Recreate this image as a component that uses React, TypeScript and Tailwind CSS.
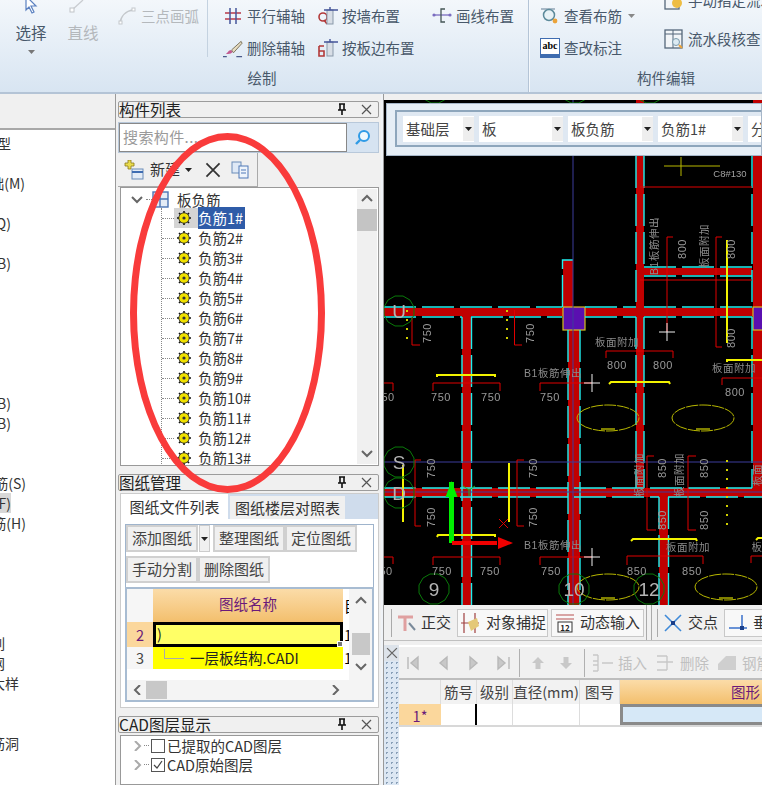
import type { ReactNode } from "react";

const FONT = "font-['Noto_Sans_CJK_SC','Liberation_Sans',sans-serif]";

/* ---------- small drawn icons ---------- */

function Pin() {
  return (
    <svg width="12" height="13" viewBox="0 0 12 13">
      <path d="M3 1h6M4 1v6M8 1v6M2 7h8M6 7v5" stroke="#111" strokeWidth="1.6" fill="none" />
    </svg>
  );
}

function CloseX({ size = 11, color = "#555" }: { size?: number; color?: string }) {
  return (
    <svg width={size} height={size} viewBox="0 0 11 11" className="shrink-0">
      <path d="M1 1l9 9M10 1l-9 9" stroke={color} strokeWidth="1.2" />
    </svg>
  );
}

function Caret({ color = "#222" }: { color?: string }) {
  return (
    <svg width="7" height="4" viewBox="0 0 7 4" className="shrink-0">
      <path d="M0 0h7L3.5 4z" fill={color} />
    </svg>
  );
}

function Chevron({ dir, color = "#666" }: { dir: "up" | "down" | "left" | "right"; color?: string }) {
  const d = {
    up: "M1 7l5-5 5 5",
    down: "M1 2l5 5 5-5",
    left: "M8 0L3 5l5 5",
    right: "M3 0l5 5-5 5",
  }[dir];
  return (
    <svg width="12" height="10" viewBox="0 0 12 10" className="shrink-0">
      <path d={d} stroke={color} strokeWidth="2" fill="none" />
    </svg>
  );
}

function Gear() {
  return (
    <svg width="14" height="14" viewBox="0 0 14 14">
      <path d="M7 0v14M0 7h14M2 2l10 10M12 2L2 12" stroke="#111" strokeWidth="1.6" />
      <circle cx="7" cy="7" r="5.2" fill="#f0e000" stroke="#222" strokeWidth="0.8" />
      <circle cx="7" cy="7" r="1.6" fill="#333" />
    </svg>
  );
}

const ribbonIcons: Record<string, ReactNode> = {
  arc: (
    <svg width="18" height="18" viewBox="0 0 18 18">
      <path d="M2 16C3 9 8 4 15 3" stroke="#c4c8cc" strokeWidth="1.6" fill="none" />
      <rect x="1" y="14" width="3" height="3" fill="#fff" stroke="#c4c8cc" />
      <rect x="14" y="1" width="3" height="3" fill="#fff" stroke="#c4c8cc" />
    </svg>
  ),
  parallel: (
    <svg width="18" height="18" viewBox="0 0 18 18">
      <path d="M1 6h16M1 12h16" stroke="#b8394a" strokeWidth="1.3" />
      <path d="M6 1v16M12 1v16" stroke="#45559a" strokeWidth="1.5" />
    </svg>
  ),
  brush: (
    <svg width="21" height="19" viewBox="0 0 21 19">
      <path d="M19 2L9 11l2 3 9-10z" fill="#e7dcc0" stroke="#77705a" />
      <path d="M8 11c-3 1-3 3-5 4 3 1 6 0 7-2z" fill="#c25a90" />
      <path d="M0 18h4M14 18h6" stroke="#4a5a8a" strokeWidth="1.3" />
    </svg>
  ),
  wall: (
    <svg width="20" height="18" viewBox="0 0 20 18">
      <circle cx="5" cy="10" r="4" fill="none" stroke="#b23838" strokeWidth="1.6" />
      <path d="M6 13l3 4" stroke="#b23838" strokeWidth="1.6" />
      <rect x="9" y="3" width="6" height="14" fill="#d8dee6" stroke="#8a99aa" />
      <path d="M6 3h14M12 0v3" stroke="#45559a" strokeWidth="1.4" />
    </svg>
  ),
  slab: (
    <svg width="20" height="18" viewBox="0 0 20 18">
      <path d="M1 7v10h5V12H1M6 7H1" fill="none" stroke="#b23838" strokeWidth="1.6" />
      <rect x="9" y="3" width="6" height="14" fill="#d8dee6" stroke="#8a99aa" />
      <path d="M6 3h14M12 0v3" stroke="#45559a" strokeWidth="1.4" />
    </svg>
  ),
  drawline: (
    <svg width="20" height="18" viewBox="0 0 20 18">
      <path d="M1 8h18" stroke="#7a6cc0" strokeWidth="1.3" />
      <circle cx="2" cy="8" r="1.6" fill="#7a6cc0" />
      <circle cx="18" cy="8" r="1.6" fill="#7a6cc0" />
      <path d="M13 2H9v13h4" stroke="#455" strokeWidth="1.3" fill="none" />
    </svg>
  ),
  view: (
    <svg width="20" height="18" viewBox="0 0 20 18">
      <path d="M1 2h14" stroke="#8aa0b0" strokeWidth="1.4" />
      <circle cx="9" cy="8" r="5.5" fill="#e8f2f6" stroke="#5c8a9a" strokeWidth="1.5" />
      <circle cx="15" cy="14" r="2.4" fill="#eba33a" />
    </svg>
  ),
  abc: (
    <div className="w-[20px] h-[20px] bg-white border border-[#3e6cb0] border-b-[4px] text-[10px] leading-[13px] text-center font-bold text-black font-['Liberation_Serif',serif]">
      abc
    </div>
  ),
  flow: (
    <svg width="20" height="20" viewBox="0 0 20 20">
      <rect x="1" y="1" width="17" height="18" fill="#f2f5f8" stroke="#55677a" strokeWidth="1.3" />
      <path d="M9 1v18M1 5h17" stroke="#55677a" />
      <circle cx="12" cy="13" r="3.5" fill="#dceaf2" stroke="#7a99aa" />
      <path d="M15 16l3 3" stroke="#eba33a" strokeWidth="2" />
    </svg>
  ),
  gearDoc: (
    <svg width="20" height="20" viewBox="0 0 20 20">
      <rect x="1" y="1" width="14" height="18" fill="#f2f5f8" stroke="#55677a" strokeWidth="1.3" />
      <circle cx="13" cy="13" r="5" fill="#eebd44" />
    </svg>
  ),
};

function RibbonItem({ icon, label, disabled }: { icon: string; label: string; disabled?: boolean }) {
  return (
    <div className="flex items-center h-[18px] gap-1 whitespace-nowrap">
      <span className="flex items-center justify-center w-[20px] h-[18px] shrink-0">{ribbonIcons[icon]}</span>
      <span className={disabled ? "text-[#b4b8bc]" : "text-[#48586a]"}>{label}</span>
    </div>
  );
}

/* ---------- ribbon ---------- */

function Ribbon() {
  return (
    <div className="flex h-[94px] shrink-0 overflow-hidden border-b-2 border-[#b4c4d6] bg-gradient-to-b from-[#f3f7fb] to-[#d8e5f2] text-[14.5px]">
      <div className="flex flex-col w-[529px] shrink-0 border-r border-[#b4c4d6]">
        <div className="flex h-[68px]">
          <div className="ml-[15px] w-[32px] flex flex-col items-center whitespace-nowrap">
            <svg width="16" height="14" viewBox="0 0 16 14" className="mb-[8px]">
              <path d="M3 -4v14l3-3 3 6 2-1-3-6h5z" fill="#fff" stroke="#5a80c0" strokeWidth="1.2" />
            </svg>
            <span className="text-[#48586a] leading-[20px] text-[15.5px]">选择</span>
            <span className="mt-[8px]"><Caret color="#777" /></span>
          </div>
          <div className="ml-[21px] w-[30px] flex flex-col items-center whitespace-nowrap">
            <svg width="28" height="14" viewBox="0 0 28 14" className="mb-[8px]">
              <path d="M3 10L14 0" stroke="#c9ccd0" strokeWidth="1.3" />
              <rect x="1" y="8" width="4" height="4" fill="#fff" stroke="#c0c4c8" />
            </svg>
            <span className="text-[#b4b8bc] leading-[20px] text-[15.5px]">直线</span>
          </div>
          <div className="ml-[19px] pt-[7px] w-[90px]">
            <RibbonItem icon="arc" label="三点画弧" disabled />
          </div>
          <div className="w-px h-[57px] bg-[#c4d2e0]" />
          <div className="ml-[15px] pt-[7px] flex flex-col gap-[14px] w-[95px]">
            <RibbonItem icon="parallel" label="平行辅轴" />
            <RibbonItem icon="brush" label="删除辅轴" />
          </div>
          <div className="pt-[7px] flex flex-col gap-[14px] w-[114px]">
            <RibbonItem icon="wall" label="按墙布置" />
            <RibbonItem icon="slab" label="按板边布置" />
          </div>
          <div className="pt-[7px]">
            <RibbonItem icon="drawline" label="画线布置" />
          </div>
        </div>
        <div className="text-center text-[#48586a] leading-[20px] pr-[4px]">绘制</div>
      </div>
      <div className="flex flex-col flex-1 min-w-0 border-l border-[#f4f8fc]">
        <div className="flex h-[68px]">
          <div className="ml-[10px] pt-[7px] flex flex-col gap-[14px] w-[124px] shrink-0">
            <div className="flex items-center gap-[6px]">
              <RibbonItem icon="view" label="查看布筋" />
              <Caret color="#888" />
            </div>
            <RibbonItem icon="abc" label="查改标注" />
          </div>
          <div className="-mt-[9px] flex flex-col gap-[21px] shrink-0">
            <RibbonItem icon="gearDoc" label="手动指定流水段" />
            <RibbonItem icon="flow" label="流水段核查" />
          </div>
        </div>
        <div className="text-[#48586a] leading-[20px] pl-[107px]">构件编辑</div>
      </div>
    </div>
  );
}

/* ---------- left tree (cut off by the window edge) ---------- */

const leftRows: [string, number][] = [
  ["类型", 104], ["", 0], ["基础(M)", 90], ["", 0], ["墙(Q)", 104], ["", 0], ["板(B)", 104],
  ["", 0], ["", 0], ["", 0], ["", 0], ["", 0], ["", 0], ["板(B)", 104], ["板(B)", 104], ["", 0], ["", 0],
  ["板筋(S)", 89], ["(F)", 104], ["筋(H)", 89], ["", 0], ["", 0], ["", 0], ["", 0], ["", 0],
  ["排列", 110], ["钢网", 110], ["节点大样", 96], ["", 0], ["", 0], ["板筋洞", 96],
];

function LeftPanel() {
  return (
    <div className="w-[116px] shrink-0 flex flex-col border-r border-[#9a9a9a] bg-white overflow-hidden">
      <div className="h-[36px] shrink-0 bg-[#f0f0f0] border-b-2 border-[#a8a8a8]" />
      <div className="flex flex-col pt-[3px] text-[14px] text-[#333]">
        {leftRows.map(([text, pad], i) => (
          <div key={i} className="flex justify-end h-[20px] leading-[20px] whitespace-nowrap" style={{ paddingRight: pad }}>
            <span className={text === "(F)" ? "bg-[#d8d8d8]" : ""}>{text}</span>
          </div>
        ))}
      </div>
    </div>
  );
}

/* ---------- middle dock panels ---------- */

function DockHeader({ title }: { title: string }) {
  return (
    <div className="flex items-center h-[17px] shrink-0 bg-[#f0f0f0] border border-[#9c9c9c] rounded-[2px] text-[15.5px] text-[#222] whitespace-nowrap">
      <span className="flex-1">{title}</span>
      <span className="mr-[13px] flex"><Pin /></span>
      <span className="mr-[6px] flex"><CloseX /></span>
    </div>
  );
}

function Btn({ children, w }: { children: ReactNode; w: string }) {
  return (
    <div className={`${w} h-[27px] flex items-center justify-center bg-[#f0f0f0] border-2 border-[#d0d0d0] text-[15px] text-[#444] whitespace-nowrap`}>
      {children}
    </div>
  );
}

function ComponentList() {
  const rows = Array.from({ length: 13 }, (_, i) => `负筋${i + 1}#`);
  return (
    <div className="flex flex-col">
      <DockHeader title="构件列表" />
      <div className="flex mt-[4px] h-[31px] border border-[#b8c8da]">
        <div className="flex-1 bg-white border border-[#888] flex items-center pl-[3px] text-[15px] text-[#9a9a9a] tracking-[0.4px]">搜索构件...</div>
        <div className="w-[31px] bg-[#d6e3f1] flex items-center justify-center">
          <svg width="18" height="18" viewBox="0 0 18 18">
            <circle cx="10" cy="7" r="5" fill="#eef8fd" stroke="#2f9be6" strokeWidth="2" />
            <path d="M6 11l-4 4" stroke="#2f9be6" strokeWidth="2.4" />
          </svg>
        </div>
      </div>
      <div className="flex items-center w-[140px] h-[34px] bg-[#f0f0f0] border-r border-b border-[#aaa] text-[15px] text-[#333]">
        <svg width="22" height="20" viewBox="0 0 22 20" className="ml-[5px] shrink-0">
          <path d="M5 0h3v3h3v3H8v3H5V6H2V3h3z" fill="#e9dc4e" stroke="#8a7a1a" strokeWidth="0.8" />
          <rect x="9" y="9" width="11" height="10" fill="#e4ecf6" stroke="#6a8cb8" />
          <path d="M9 12h11" stroke="#3f6db2" strokeWidth="2" />
        </svg>
        <span className="ml-[5px] whitespace-nowrap">新建</span>
        <span className="ml-[5px] flex"><Caret /></span>
        <span className="ml-[13px] flex"><CloseX size={16} color="#333" /></span>
        <svg width="20" height="18" viewBox="0 0 20 18" className="ml-[10px] shrink-0">
          <rect x="1" y="1" width="9" height="11" fill="#dfe9f6" stroke="#6a8cb8" />
          <rect x="8" y="5" width="9" height="12" fill="#eef4fb" stroke="#4f79b8" />
          <path d="M10 9h5M10 12h5" stroke="#4f79b8" />
        </svg>
      </div>
      <div className="flex h-[279px] ml-[2px] bg-white border border-[#999] overflow-hidden text-[14.5px] text-[#333]">
        <div className="flex-1 min-w-0 overflow-hidden">
          <div className="flex items-center h-[20px] pt-[3px] pl-[10px]">
            <Chevron dir="down" />
            <span className="ml-[3px] w-[6px] border-t border-dotted border-[#888]" />
            <svg width="17" height="17" viewBox="0 0 17 17" className="shrink-0">
              <rect x="1" y="1" width="15" height="15" fill="#e4ecf6" stroke="#4a74b4" strokeWidth="1.4" />
              <path d="M8 1v15M1 8h15" stroke="#4a74b4" strokeWidth="1.4" />
            </svg>
            <span className="ml-[8px]">板负筋</span>
          </div>
          <div className="ml-[40px] border-l border-dotted border-[#888] flex flex-col">
            {rows.map((r, i) => (
              <div key={r} className="flex items-center h-[20px] whitespace-nowrap">
                <span className="w-[12px] border-t border-dotted border-[#888]" />
                <span className={`flex items-center h-[20px] pl-[3px] pr-[7px] ${i === 0 ? "bg-[#d4d4d4]" : ""}`}>
                  <Gear />
                </span>
                <span className={i === 0 ? "bg-[#2f5ca8] text-white pr-[2px]" : ""}>{r}</span>
              </div>
            ))}
          </div>
        </div>
        <div className="w-[20px] my-[1px] mr-[1px] bg-[#f0f0f0] flex flex-col items-center">
          <div className="h-[20px] flex items-center"><Chevron dir="up" /></div>
          <div className="w-full h-[22px] bg-[#c4c4c4]" />
          <div className="flex-1" />
          <div className="h-[20px] flex items-center"><Chevron dir="down" /></div>
        </div>
      </div>
    </div>
  );
}

function DrawingPanel() {
  return (
    <div className="flex flex-col mt-[8px]">
      <DockHeader title="图纸管理" />
      <div className="mt-[2px] ml-[2px] h-[215px] bg-[#f0f0f0] border border-[#ccc] flex flex-col">
        <div className="flex h-[25px] shrink-0 bg-[#cfdcec] text-[15px] text-[#333] whitespace-nowrap">
          <div className="w-[107px] bg-white text-center leading-[25px]">图纸文件列表</div>
          <div className="w-[115px] ml-[2px] mt-[2px] bg-[#f0f0f0] text-center leading-[23px]">图纸楼层对照表</div>
        </div>
        <div className="flex-1 bg-white px-[4px] pt-[5px]">
          <div className="border border-[#9fb4cc] border-b-0 pb-[4px] flex flex-col gap-[4px]">
            <div className="flex">
              <Btn w="w-[72px]">添加图纸</Btn>
              <div className="w-[11px] ml-px h-[27px] bg-[#f0f0f0] border border-[#ccc] flex items-center justify-center"><Caret /></div>
              <span className="w-[3px]" />
              <Btn w="w-[72px]">整理图纸</Btn>
              <Btn w="w-[72px]">定位图纸</Btn>
            </div>
            <div className="flex">
              <Btn w="w-[72px]">手动分割</Btn>
              <Btn w="w-[72px]">删除图纸</Btn>
            </div>
          </div>
          <div className="flex flex-col border-2 border-[#a8bcd2] h-[115px] bg-[#f4f4f4]">
            <div className="flex h-[91px] text-[14.5px]">
              <div className="flex-1 min-w-0 bg-white overflow-hidden">
                <div className="flex h-[33px]">
                  <div className="w-[26px] shrink-0 bg-[#f6f6f6]" />
                  <div className="w-[190px] shrink-0 pb-[3px] bg-gradient-to-b from-[#fbdca8] to-[#f3bf6c] text-[#6b1a7a] flex items-center justify-center">图纸名称</div>
                  <div className="pl-[1px] leading-[33px]">目</div>
                </div>
                <div className="flex h-[25px]">
                  <div className="w-[26px] shrink-0 bg-[#fbd79c] text-[#6b1a7a] text-center leading-[25px]">2</div>
                  <div className="relative w-[190px] shrink-0 bg-[#ffff66] border-[3px] border-black leading-[18px] pl-[1px] text-[#222]">
                    )
                    <span className="absolute -right-[3px] -bottom-[3px] w-[6px] h-[6px] bg-[#777] border border-white" />
                  </div>
                  <div className="pl-[1px] leading-[25px]">1</div>
                </div>
                <div className="flex h-[22px]">
                  <div className="w-[26px] shrink-0 bg-[#f6f6f6] text-[#444] text-center leading-[22px]">3</div>
                  <div className="w-[190px] shrink-0 bg-[#ffff00] flex items-center text-[#222] whitespace-nowrap">
                    <span className="ml-[11px] mb-[8px] w-[20px] h-[10px] border-l border-b border-[#aaa]" />
                    <span className="ml-[6px]">一层板结构.CADI</span>
                  </div>
                  <div className="pl-[1px] leading-[22px]">1</div>
                </div>
              </div>
              <div className="w-[23px] shrink-0 flex flex-col items-center">
                <div className="h-[24px] flex items-center"><Chevron dir="up" /></div>
                <div className="w-[18px] h-[22px] mt-[20px] bg-[#c8c8c8]" />
                <div className="h-[24px] flex items-center"><Chevron dir="down" /></div>
              </div>
            </div>
            <div className="flex items-center h-[20px] px-[5px]">
              <Chevron dir="left" />
              <div className="w-[21px] h-[18px] ml-[2px] bg-[#c8c8c8]" />
              <div className="flex-1" />
              <span className="mr-[25px] flex"><Chevron dir="right" /></span>
            </div>
          </div>
        </div>
      </div>
    </div>
  );
}

function LayerPanel() {
  return (
    <div className="flex flex-col mt-[8px]">
      <DockHeader title="CAD图层显示" />
      <div className="mt-[2px] ml-[2px] h-[50px] bg-white border border-[#999] text-[14.5px] text-[#333]">
        {["已提取的CAD图层", "CAD原始图层"].map((t, i) => (
          <div key={t} className="flex items-center h-[19px] pl-[11px] whitespace-nowrap">
            <Chevron dir="right" color="#aaa" />
            <span className="w-[5px] border-t border-dotted border-[#888] mr-[2px]" />
            <span className="flex items-center justify-center w-[14px] h-[14px] border border-[#555] mr-[2px] shrink-0">
              {i === 1 && (
                <svg width="12" height="12" viewBox="0 0 12 12">
                  <path d="M2 6l3 3 5-7" stroke="#444" strokeWidth="1.2" fill="none" />
                </svg>
              )}
            </span>
            {t}
          </div>
        ))}
      </div>
    </div>
  );
}

/* ---------- CAD canvas ---------- */

const beams = [
  [384, 308, 378, 8], [384, 488, 378, 9], [640, 268, 112, 7],
  [462, 316, 9, 289], [568, 330, 12, 275], [563, 260, 10, 48],
  [636, 100, 8, 390], [753, 100, 9, 390], [659, 497, 9, 108],
];
const cyan = [
  "M384 307H562", "M585 307H636", "M644 307H752", "M384 317H462", "M471 317H562", "M585 317H636", "M644 317H752",
  "M384 488H752", "M384 497H659", "M668 497H762", "M644 267H752", "M644 276H752",
  "M462 317V605", "M471.5 317V605", "M568 330V605", "M580 330V605",
  "M636 156V305", "M644 156V268", "M636 317V488", "M644 317V488", "M752 156V305", "M752 317V488",
  "M659 497V605", "M668.5 497V605", "M562.5 307V260H573",
];
const redLines = [
  "M412 317V345H420", "M514.5 310V345H522", "M673 237H667V332", "M722 237H716V347H722",
  "M606 358V351H673V358", "M384 383H393V391", "M433 391V383H500V391", "M540 391V383H592", "M722 385V378H762",
  "M421 460H415V526H421", "M524 460H517V526H524", "M654 456H647V530H656", "M696 456H688V530H696",
  "M433 565V557H500V565", "M384 557H393V564", "M540 565V557H592", "M627 565V556H703V564", "M751 563V556H762",
  "M640 187H752", "M640 280H752", "M499 519L508 528M508 519L499 528",
];
const yellow = [
  "M437 377V375H495V377", "M609 384L611 382H669L670 384", "M727 362V360H762", "M727 240V343",
  "M403 465V522", "M509 463V522", "M437 537L438 535H495V537", "M631 541L633 539H696L697 541", "M756 540L758 538H762",
];
const yellowDots = ["M407 310V342", "M507 310V342", "M727 460V525"];
const ellipses = [[608, 418], [703, 418], [608, 587], [726, 587]];
const bubbles: [number, number, string][] = [
  [399, 311, "U"], [399, 462, "S"], [399, 493, "D"], [434, 589, "9"], [574, 589, "10"], [649, 589, "12"],
  [435, 88, ""], [575, 88, ""], [650, 88, ""],
];
const dims: [number, number, string][] = [
  [617, 365, "800"], [663, 365, "800"], [735, 392, "800"], [441, 397, "750"], [491, 397, "750"], [550, 397, "750"], [388, 397, "50"],
  [442, 571, "750"], [490, 571, "750"], [551, 571, "750"], [637, 571, "850"], [692, 571, "850"], [386, 571, "50"],
];
const dimsV: [number, number, string][] = [
  [427, 333, "750"], [530, 333, "750"], [682, 249, "800"], [731, 249, "800"], [731, 338, "800"],
  [431, 468, "750"], [431, 517, "750"], [533, 468, "750"], [533, 517, "750"],
  [662, 468, "850"], [662, 520, "850"], [704, 468, "850"], [704, 520, "850"],
];
const notes: [number, number, string][] = [
  [617, 346, "板面附加"], [734, 372, "板面附加"], [553, 377, "B1板筋伸出"], [553, 549, "B1板筋伸出"], [688, 551, "板面附加"], [757, 551, "板"],
];
const notesV: [number, number, string][] = [
  [654, 246, "B1板筋伸出"], [704, 246, "板面附加"], [639, 475, "板面附加"], [679, 475, "板面附加"], [757, 475, "板面"],
];
const cursors = [[667, 332], [592, 383], [592, 557]];

function octagon(cx: number, cy: number, r: number) {
  return Array.from({ length: 12 }, (_, i) => {
    const a = (i * Math.PI) / 6 + Math.PI / 12;
    return `${cx + r * Math.cos(a)},${cy + r * Math.sin(a)}`;
  }).join(" ");
}

function CadDrawing() {
  return (
    <svg viewBox="384 100 378 505" className="absolute inset-0 w-full h-full blur-[0.3px]">
      {beams.map(([x, y, w, h], i) => (
        <rect key={i} x={x} y={y} width={w} height={h} fill="#c00000" />
      ))}
      <rect x="563" y="307" width="22" height="23" fill="#5a0fb0" stroke="#d8c020" strokeWidth="1.2" />
      <rect x="753" y="307" width="12" height="23" fill="#5a0fb0" stroke="#d8c020" strokeWidth="1.2" />
      {cyan.map((d) => (
        <path key={d} d={d} stroke="#20f0f0" strokeWidth="1.4" fill="none" strokeDasharray="32 6" />
      ))}
      <path d="M573 100V605M384 462H762M384 492H762" stroke="#3c3c9c" strokeWidth="1" />
      {redLines.map((d) => (
        <path key={d} d={d} stroke="#e00000" strokeWidth="1" fill="none" />
      ))}
      {yellow.map((d) => (
        <path key={d} d={d} stroke="#f2f200" strokeWidth="2" fill="none" />
      ))}
      {yellowDots.map((d) => (
        <path key={d} d={d} stroke="#d0d000" strokeWidth="2" fill="none" strokeDasharray="2 7" />
      ))}
      <path d="M664 166H720M681 157V176" stroke="#b8b800" strokeWidth="1" />
      {ellipses.map(([cx, cy]) => (
        <g key={`${cx}-${cy}`}>
          <ellipse cx={cx} cy={cy} rx="31" ry="13" fill="none" stroke="#b8b800" strokeWidth="1" strokeDasharray="12 1" />
          <path d={`M${cx - 7} ${cy + 11}H${cx + 7}`} stroke="#b8b800" strokeWidth="1.4" />
        </g>
      ))}
      {bubbles.map(([cx, cy, t]) => (
        <g key={`${cx}-${cy}`}>
          <polygon points={octagon(cx, cy, 15.5)} fill="none" stroke="#0a7a0a" strokeWidth="1" />
          {t && (
            <text x={cx} y={cy + 7} textAnchor="middle" fontSize="19" fill="#b4b4b4" fontFamily="Liberation Sans, sans-serif">
              {t}
            </text>
          )}
        </g>
      ))}
      {/* ucs arrows */}
      <path d="M449 482h5v61h-5z" fill="#00f000" />
      <path d="M451.5 481l6 16h-12z" fill="#00f000" />
      <path d="M452 541h45v4h-45z" fill="#f00000" />
      <path d="M498 537l15 6-15 6z" fill="#f00000" />
      <path d="M469 496V490L463 486M469 490L475 486" stroke="#20b020" strokeWidth="1" fill="none" />
      {dims.map(([x, y, t]) => (
        <text key={`${x}-${y}`} x={x} y={y + 4} textAnchor="middle" fontSize="11" fill="#999999" fontFamily="Liberation Sans, sans-serif" letterSpacing="0.5">
          {t}
        </text>
      ))}
      {dimsV.map(([x, y, t]) => (
        <text key={`${x}-${y}`} x={x} y={y} textAnchor="middle" dominantBaseline="central" transform={`rotate(-90 ${x} ${y})`} fontSize="11" fill="#999999" fontFamily="Liberation Sans, sans-serif" letterSpacing="0.5">
          {t}
        </text>
      ))}
      {notes.map(([x, y, t]) => (
        <text key={`${x}-${y}`} x={x} y={y} textAnchor="middle" fontSize="10.5" fill="#8c8c8c" fontFamily="Liberation Sans, Noto Sans CJK SC, sans-serif" letterSpacing="0.5">
          {t}
        </text>
      ))}
      {notesV.map(([x, y, t]) => (
        <text key={`${x}-${y}`} x={x} y={y} textAnchor="middle" dominantBaseline="central" transform={`rotate(-90 ${x} ${y})`} fontSize="10.5" fill="#8c8c8c" fontFamily="Liberation Sans, Noto Sans CJK SC, sans-serif" letterSpacing="0.5">
          {t}
        </text>
      ))}
      <text x="730" y="177" textAnchor="middle" fontSize="9.5" fill="#a0a0a0" fontFamily="Liberation Sans, sans-serif">C8#130</text>
      {cursors.map(([x, y]) => (
        <path key={`${x}-${y}`} d={`M${x - 8} ${y}H${x + 8}M${x} ${y - 9}V${y + 9}`} stroke="#f0f0f0" strokeWidth="1" />
      ))}
    </svg>
  );
}

function Combo({ label, w }: { label: string; w: string }) {
  return (
    <div className={`${w} shrink-0 h-[26px] bg-white flex items-center pl-[3px] text-[14.5px] text-[#444] whitespace-nowrap`}>
      <span className="flex-1">{label}</span>
      <span className="w-[11px] h-[24px] bg-[#eeeeee] flex items-center justify-center"><Caret /></span>
    </div>
  );
}

function Canvas() {
  return (
    <div className="relative h-[505px] shrink-0 bg-black overflow-hidden">
      <CadDrawing />
      <div className="relative mt-[3px] ml-[2px] h-[53px] bg-[#e6eef6] border border-[#a6b6c8] pl-[8px] pt-[6px]">
        <div className="flex gap-[5px] h-[37px] border-2 border-r-0 border-[#8ea6bc] bg-[#dfe8f2] pl-[6px] pt-[4px] overflow-hidden">
          <Combo label="基础层" w="w-[71px]" />
          <Combo label="板" w="w-[84px]" />
          <Combo label="板负筋" w="w-[85px]" />
          <Combo label="负筋1#" w="w-[85px]" />
          <Combo label="分层1" w="w-[85px]" />
        </div>
      </div>
    </div>
  );
}

/* ---------- snap bar + rebar table ---------- */

function SnapBar() {
  const toggle = "flex items-center gap-[5px] h-[28px] bg-[#f8f8f8] border border-[#c8c8c8] pl-[3px] shrink-0 text-[15px] text-[#333] whitespace-nowrap";
  return (
    <div className="flex items-center h-[36px] shrink-0 bg-[#f0f0f0] border-b border-[#c0c0c0] pl-[6px] overflow-hidden">
      <span className="w-[2px] h-[28px] border-r border-[#aaa] shrink-0" />
      <div className="flex items-center gap-[4px] w-[65px] pl-[5px] shrink-0 text-[15px] text-[#333] whitespace-nowrap">
        <svg width="20" height="18" viewBox="0 0 20 18" className="shrink-0">
          <path d="M1 3h15M8 3v14" stroke="#e0a0a0" strokeWidth="3" />
          <path d="M12 9l6 7" stroke="#7a8a9a" strokeWidth="2" />
        </svg>
        正交
      </div>
      <div className={`${toggle} w-[91px]`}>
        <svg width="20" height="22" viewBox="0 0 20 22" className="shrink-0">
          <path d="M3 1v20M14 1v20M0 11h18" stroke="#a04040" strokeWidth="1.2" />
          <path d="M7 10l9-4 2 8-8 5z" fill="#e4c878" />
        </svg>
        对象捕捉
      </div>
      <div className={`${toggle} w-[93px] ml-[3px]`}>
        <svg width="20" height="20" viewBox="0 0 20 20" className="shrink-0">
          <path d="M1 2h18M1 6h18" stroke="#b85050" strokeWidth="1.2" />
          <rect x="3" y="9" width="14" height="10" fill="#fff" stroke="#333" />
          <text x="10" y="17.5" textAnchor="middle" fontSize="8" fontWeight="bold" fill="#222">12</text>
        </svg>
        动态输入
      </div>
      <span className="w-[6px] h-[36px] ml-[2px] border-l border-r border-[#aaa] shrink-0" />
      <span className="ml-[2px] w-[4px] h-[28px] border-r border-[#aaa] shrink-0" />
      <div className="flex items-center gap-[6px] w-[66px] pl-[6px] shrink-0 text-[15px] text-[#333] whitespace-nowrap">
        <svg width="18" height="18" viewBox="0 0 18 18" className="shrink-0">
          <path d="M1 1l16 16M17 1L1 17" stroke="#3f8ad8" strokeWidth="1.6" />
          <rect x="7" y="7" width="4" height="4" fill="#1a3f8a" />
        </svg>
        交点
      </div>
      <div className={toggle}>
        <svg width="20" height="18" viewBox="0 0 20 18" className="shrink-0">
          <path d="M1 14h18" stroke="#2c66c8" strokeWidth="1.4" />
          <path d="M14 1v13" stroke="#2c66c8" strokeWidth="1.4" />
          <rect x="12" y="12" width="4" height="4" fill="#1a3f8a" />
        </svg>
        垂点
      </div>
    </div>
  );
}

function RebarTable() {
  const tools = ["M4 4v12M14 4L7 10l7 6z", "M13 4L6 10l7 6z", "M6 4l7 6-7 6z", "M15 4v12M4 4l7 6-7 6z"];
  return (
    <div className="flex flex-1 min-h-0 mt-[4px] bg-white overflow-hidden">
      <div className="w-[15px] shrink-0 flex flex-col bg-[radial-gradient(#8aa0b8_1px,#dce7f3_1px)] bg-[length:5px_5px]">
        <div className="h-[16px] bg-[#dde3ea] flex items-center justify-center">
          <CloseX size={12} color="#666" />
        </div>
      </div>
      <div className="flex-1 min-w-0 flex flex-col">
        <div className="flex items-center h-[35px] shrink-0 bg-[#f0f0f0] border-t-2 border-t-white border-b-2 border-b-[#bdbdbd] pl-[5px] text-[14.5px] text-[#c0c0c0] whitespace-nowrap overflow-hidden">
          {tools.map((d, i) => (
            <svg key={i} width="18" height="20" viewBox="0 0 18 20" className="mr-[12px] shrink-0">
              <path d={d} fill="#c8c8c8" stroke="#b8b8b8" strokeWidth="1.4" />
            </svg>
          ))}
          <span className="-ml-[5px] w-px h-[28px] bg-[#b0b0b0] shrink-0" />
          <span className="ml-[12px] mr-[16px] flex shrink-0"><svg width="12" height="12" viewBox="0 0 12 12"><path d="M6 0l6 6H8.5v6h-5V6H0z" fill="#c8c8c8" /></svg></span>
          <span className="mr-[12px] flex shrink-0"><svg width="12" height="12" viewBox="0 0 12 12"><path d="M6 12L0 6h3.5V0h5v6H12z" fill="#c8c8c8" /></svg></span>
          <span className="w-px h-[28px] bg-[#b0b0b0] mr-[6px] shrink-0" />
          <svg width="24" height="18" viewBox="0 0 24 18" className="shrink-0"><path d="M2 1h5M2 7h5M2 17h5M2 11h5M11 9h11M7 1v16" stroke="#c8c8c8" strokeWidth="1.4" fill="none" /></svg>
          <span className="ml-[3px] mr-[8px]">插入</span>
          <svg width="22" height="18" viewBox="0 0 22 18" className="shrink-0"><path d="M2 2h10M2 8h16M2 16h10M12 2v14" stroke="#c8c8c8" strokeWidth="1.4" fill="none" /></svg>
          <span className="ml-[3px] mr-[8px]">删除</span>
          <svg width="20" height="18" viewBox="0 0 20 18" className="shrink-0"><path d="M1 10l8-8h10v14H1z" fill="#cfcfcf" /></svg>
          <span className="ml-[5px]">钢筋图库</span>
        </div>
        <div className="flex h-[24px] shrink-0 text-[14.5px] text-[#444] whitespace-nowrap">
          <div className="w-[42px] shrink-0 bg-[#f2f2f2] border-r border-[#ddd]" />
          {[["筋号", "w-[36px]"], ["级别", "w-[36px]"], ["直径(mm)", "w-[67px]"], ["图号", "w-[40px]"]].map(([t, w]) => (
            <div key={t} className={`${w} shrink-0 bg-[#f2f2f2] border-r border-[#ddd] text-center leading-[24px]`}>{t}</div>
          ))}
          <div className="flex-1 bg-gradient-to-b from-[#fbdca8] to-[#f3bf6c] text-[#6b1a7a] pl-[111px] leading-[24px] overflow-hidden">图形</div>
        </div>
        <div className="flex h-[23px] shrink-0 border-b-2 border-[#d8d8d8] text-[14.5px]">
          <div className="w-[42px] shrink-0 bg-[#fbd79c] text-[#6b1a7a] text-center leading-[23px]">1*</div>
          <div className="w-[36px] shrink-0 border-r-2 border-black" />
          <div className="w-[36px] shrink-0 border-r border-[#ddd]" />
          <div className="w-[67px] shrink-0 border-r border-[#ddd]" />
          <div className="w-[40px] shrink-0" />
          <div className="flex-1 bg-[#d6e8f7] border-[3px] border-r-0 border-[#8a8a8a]" />
        </div>
      </div>
    </div>
  );
}

export default function App() {
  return (
    <div className={`relative w-[762px] h-[785px] overflow-hidden flex flex-col bg-[#f0f3f7] ${FONT}`}>
      <Ribbon />
      <div className="flex flex-1 min-h-0">
        <LeftPanel />
        <div className="w-[265px] shrink-0 flex flex-col pt-[7px] pl-[2px] pr-[2px] bg-[#f0f0f0]">
          <ComponentList />
          <DrawingPanel />
          <LayerPanel />
        </div>
        <div className="flex-1 min-w-0 flex flex-col pt-[6px] bg-[#f0f0f0] border-l border-[#999] ml-[2px]">
          <Canvas />
          <SnapBar />
          <RebarTable />
        </div>
      </div>
      {/* hand-drawn red ring marked over the screenshot */}
      <div className="absolute left-[130px] top-[133px] w-[195px] h-[360px] rounded-[50%] border-[7px] border-[#f93b3b] pointer-events-none" />
    </div>
  );
}
